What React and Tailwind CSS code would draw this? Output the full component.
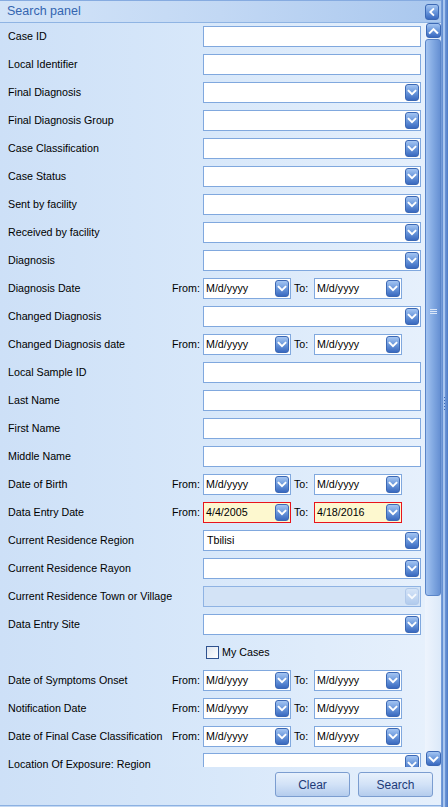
import React from "react";

const rows = [
  { label: "Case ID", type: "text" },
  { label: "Local Identifier", type: "text" },
  { label: "Final Diagnosis", type: "combo" },
  { label: "Final Diagnosis Group", type: "combo" },
  { label: "Case Classification", type: "combo" },
  { label: "Case Status", type: "combo" },
  { label: "Sent by facility", type: "combo" },
  { label: "Received by facility", type: "combo" },
  { label: "Diagnosis", type: "combo" },
  { label: "Diagnosis Date", type: "date" },
  { label: "Changed Diagnosis", type: "combo" },
  { label: "Changed Diagnosis date", type: "date" },
  { label: "Local Sample ID", type: "text" },
  { label: "Last Name", type: "text" },
  { label: "First Name", type: "text" },
  { label: "Middle Name", type: "text" },
  { label: "Date of Birth", type: "date" },
  { label: "Data Entry Date", type: "date", from: "4/4/2005", to: "4/18/2016", error: true },
  { label: "Current Residence Region", type: "combo", value: "Tbilisi" },
  { label: "Current Residence Rayon", type: "combo" },
  { label: "Current Residence Town or Village", type: "combo", disabled: true },
  { label: "Data Entry Site", type: "combo" },
  { label: "", type: "check" },
  { label: "Date of Symptoms Onset", type: "date" },
  { label: "Notification Date", type: "date" },
  { label: "Date of Final Case Classification", type: "date" },
  { label: "Location Of Exposure: Region", type: "combo", clip: true },
];

function Chevron({ dir = "down" }) {
  const d =
    dir === "down"
      ? "M3 5.5 L7 9.5 L11 5.5"
      : dir === "up"
      ? "M3 9 L7 5 L11 9"
      : "M8.5 3.5 L5 7 L8.5 10.5";
  return (
    <svg width="14" height="14" viewBox="0 0 14 14" className="block">
      <path d={d} fill="none" stroke="white" strokeWidth="2.2" strokeLinecap="square" strokeLinejoin="miter" />
    </svg>
  );
}

function DropBtn({ disabled }) {
  return (
    <span
      className={
        disabled
          ? "w-[14px] h-[17px] rounded-[3px] border border-[#a9c3e8] bg-gradient-to-b from-[#d6e5f8] to-[#aac6ec] flex items-center justify-center opacity-80"
          : "w-[14px] h-[17px] rounded-[3px] border border-[#3c68b4] bg-gradient-to-b from-[#a4c5f2] via-[#6a97db] to-[#3a69bf] flex items-center justify-center"
      }
    >
      <Chevron />
    </span>
  );
}

function TextBox() {
  return <div className="w-[218px] h-[21px] border border-[#80a8de] bg-white" />;
}

function Combo({ value, disabled }) {
  return (
    <div
      className={
        disabled
          ? "w-[218px] h-[21px] shrink-0 border border-[#8fb3e3] bg-[#d3e3f6] flex items-center justify-between pl-[3px] pr-[1px]"
          : "w-[218px] h-[21px] shrink-0 border border-[#80a8de] bg-white flex items-center justify-between pl-[3px] pr-[1px]"
      }
    >
      <span className="text-black">{value || ""}</span>
      <DropBtn disabled={disabled} />
    </div>
  );
}

function DateBox({ value, error }) {
  return (
    <div
      className={
        error
          ? "w-[88px] h-[21px] border border-[#e8141c] bg-[#fdf8cf] flex items-center justify-between pl-[2px] pr-[1px]"
          : "w-[88px] h-[21px] border border-[#80a8de] bg-white flex items-center justify-between pl-[2px] pr-[1px]"
      }
    >
      <span className="text-black">{value || "M/d/yyyy"}</span>
      <DropBtn />
    </div>
  );
}

function Row({ r }) {
  if (r.type === "check") {
    return (
      <div className="flex items-center h-[28px]">
        <div className="w-[206px] shrink-0" />
        <span className="w-[13px] h-[13px] border border-[#2f528f] bg-gradient-to-br from-[#dfe6ef] to-white" />
        <span className="ml-[3px]">My Cases</span>
      </div>
    );
  }
  return (
    <div className="flex items-center h-[28px]">
      <div className="w-[172px] shrink-0 pl-[8px] whitespace-nowrap overflow-visible">{r.label}</div>
      {r.type === "date" ? (
        <>
          <div className="w-[31px] shrink-0">From:</div>
          <DateBox value={r.from} error={r.error} />
          <div className="w-[23px] shrink-0 pl-[3px]">To:</div>
          <DateBox value={r.to} error={r.error} />
        </>
      ) : (
        <>
          <div className="w-[31px] shrink-0" />
          {r.type === "text" ? (
            <TextBox />
          ) : r.clip ? (
            <div className="self-start mt-[3px] h-[14px] overflow-hidden">
              <Combo value={r.value} disabled={r.disabled} />
            </div>
          ) : (
            <Combo value={r.value} disabled={r.disabled} />
          )}
        </>
      )}
    </div>
  );
}

function ScrollBtn({ dir }) {
  return (
    <div className="ml-[1px] w-[15px] h-[15px] rounded-[3px] border border-[#3c68b4] bg-gradient-to-b from-[#a4c5f2] via-[#6a97db] to-[#3a69bf] flex items-center justify-center">
      <Chevron dir={dir} />
    </div>
  );
}

function Btn({ children }) {
  return (
    <button className="w-[75px] h-[25px] rounded-[3px] border border-[#7b9dd0] bg-gradient-to-b from-[#e8f1fc] via-[#d2e2f7] to-[#b4cced] text-[#1d3a78] text-[12px] font-['Liberation_Sans',Arial,sans-serif]">
      {children}
    </button>
  );
}

export default function App() {
  return (
    <div className="w-[448px] h-[807px] flex overflow-hidden font-['Liberation_Sans',Arial,sans-serif] text-[10.7px] text-black bg-[#d6e6f9]">
      <div className="flex-1 flex flex-col min-w-0">
        {/* header */}
        <div className="h-[23px] shrink-0 border-t border-b border-t-[#86abe0] border-b-[#8fb4e3] bg-gradient-to-r from-[#d3e4f8] via-[#c2d8f4] to-[#a9c7ee] flex items-center justify-between pl-[7px] pr-[2px]">
          <span className="text-[12.5px] text-[#3465b0]">Search panel</span>
          <span className="w-[14px] h-[16px] rounded-[3px] border border-[#3c68b4] bg-gradient-to-b from-[#a4c5f2] via-[#6a97db] to-[#3a69bf] flex items-center justify-center">
            <Chevron dir="left" />
          </span>
        </div>
        {/* body */}
        <div className="h-[744px] shrink-0 flex relative z-10">
          <div className="flex-1 h-[744px] bg-gradient-to-r from-[#cde0f7] via-[#d8e8fa] to-[#e6f0fc]">
            <div className="-mt-[1px]">
              {rows.map((r, i) => (
                <Row key={i} r={r} />
              ))}
            </div>
          </div>
          <div className="w-[16px] shrink-0 flex flex-col bg-gradient-to-r from-[#eef4fd] to-[#dce9f9]">
            <ScrollBtn dir="up" />
            <div className="mt-[1px] h-[557px] rounded-[3px] border border-[#5a85c8] bg-gradient-to-r from-[#a3c3f0] via-[#82a9e2] to-[#6690d3] flex items-center justify-center">
              <div className="flex flex-col gap-[1px] mt-[-12px]">
                <span className="w-[7px] h-[1px] bg-[#dbe7f8]" />
                <span className="w-[7px] h-[1px] bg-[#dbe7f8]" />
                <span className="w-[7px] h-[1px] bg-[#dbe7f8]" />
              </div>
            </div>
            <div className="flex-1" />
            <div className="mb-[1px]">
              <ScrollBtn dir="down" />
            </div>
          </div>
        </div>
        {/* footer */}
        <div className="flex-1 flex flex-col bg-gradient-to-r from-[#cde0f7] via-[#d8e8fa] to-[#e6f0fc]">
          <div className="flex-1 flex items-start justify-end gap-[8px] pr-[8px] pt-[5px]">
            <Btn>Clear</Btn>
            <Btn>Search</Btn>
          </div>
          <div className="h-[2px] border-t border-[#8cb1e2] bg-[#c3d8f3]" />
        </div>
      </div>
      {/* right frame */}
      <div className="w-[7px] shrink-0 flex">
        <div className="w-[2px] bg-gradient-to-r from-[#7aa0da] to-[#5f8bd0]" />
        <div className="w-[2px] bg-[#a9c6ef] flex flex-col items-center justify-center">
          <div className="flex flex-col gap-[2px]">
            <span className="w-[1px] h-[1px] bg-[#3f6cb8]" />
            <span className="w-[1px] h-[1px] bg-[#3f6cb8]" />
            <span className="w-[1px] h-[1px] bg-[#3f6cb8]" />
            <span className="w-[1px] h-[1px] bg-[#3f6cb8]" />
            <span className="w-[1px] h-[1px] bg-[#3f6cb8]" />
          </div>
        </div>
        <div className="flex-1 bg-gradient-to-r from-[#6e97d7] to-[#4f7cc6]" />
      </div>
    </div>
  );
}
